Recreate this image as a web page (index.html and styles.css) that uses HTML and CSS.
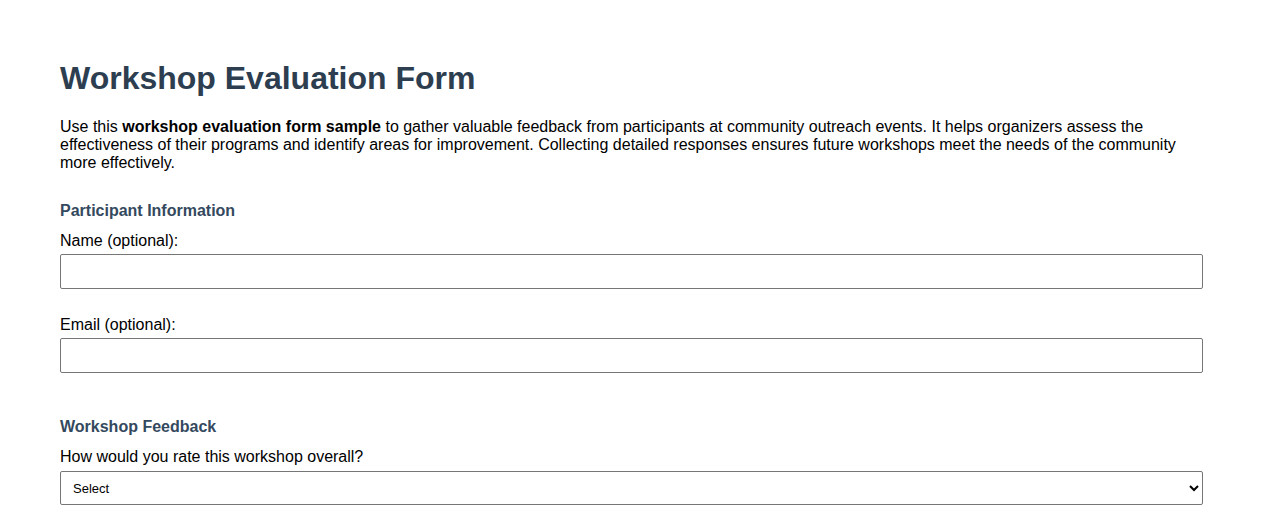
FILE: index.html
```html
<!DOCTYPE html>
<html lang="en">
<head>
<meta charset="utf-8">
<title>Workshop Evaluation Form</title>
<link rel="stylesheet" href="styles.css">
</head>
<body>
<main class="page">
  <h1 class="title">Workshop Evaluation Form</h1>
  <p class="intro">Use this <strong>workshop evaluation form sample</strong> to gather valuable feedback from participants at community outreach events. It helps organizers assess the effectiveness of their programs and identify areas for improvement. Collecting detailed responses ensures future workshops meet the needs of the community more effectively.</p>
  <form class="form">
    <section class="section">
      <h2 class="section-title">Participant Information</h2>
      <div class="field">
        <label class="label" for="name">Name (optional):</label>
        <input class="input" type="text" id="name">
      </div>
      <div class="field">
        <label class="label" for="email">Email (optional):</label>
        <input class="input" type="email" id="email">
      </div>
    </section>
    <section class="section section-feedback">
      <h2 class="section-title">Workshop Feedback</h2>
      <div class="field">
        <label class="label label-select" for="rating">How would you rate this workshop overall?</label>
        <select class="select" id="rating">
          <option>Select</option>
          <option>Excellent</option>
          <option>Good</option>
          <option>Fair</option>
          <option>Poor</option>
        </select>
      </div>
    </section>
  </form>
</main>
</body>
</html>
```
FILE: styles.css
```css
html, body {
  margin: 0;
  padding: 0;
  background: #ffffff;
}
body {
  font-family: "Liberation Sans", Arial, sans-serif;
  font-size: 16px;
  color: #000000;
}
.page {
  padding: 60px 60px 40px;
}
.title {
  margin: 0 0 21px;
  font-size: 32px;
  line-height: 37px;
  font-weight: bold;
  color: #2c3e50;
}
.intro {
  margin: 0;
  font-size: 16px;
  line-height: 18px;
}
.form {
  margin: 0;
}
.section {
  margin-top: 30px;
}
.section-feedback {
  margin-top: 45px;
}
.section-title {
  margin: 0 0 12px;
  font-size: 16px;
  line-height: 18px;
  font-weight: bold;
  color: #34495e;
}
.field {
  display: flex;
  flex-direction: column;
  gap: 4px;
}
.field + .field {
  margin-top: 27px;
}
.label {
  font-size: 16px;
  line-height: 18px;
}
.label-select {
  margin-bottom: 1px;
}
.input {
  box-sizing: border-box;
  width: 100%;
  height: 35px;
  margin: 0;
  padding: 6px 10px;
  border: 1px solid #767676;
  border-radius: 2px;
  font-family: inherit;
  font-size: 16px;
  background: #fff;
}
.select {
  box-sizing: border-box;
  width: 100%;
  height: 34px;
  margin: 0;
  padding: 0 8px;
  border: 1px solid #767676;
  border-radius: 2px;
  font-family: "Liberation Sans", Arial, sans-serif;
  font-size: 13px;
  line-height: 15px;
  color: #000;
  background: #fff;
}
```
